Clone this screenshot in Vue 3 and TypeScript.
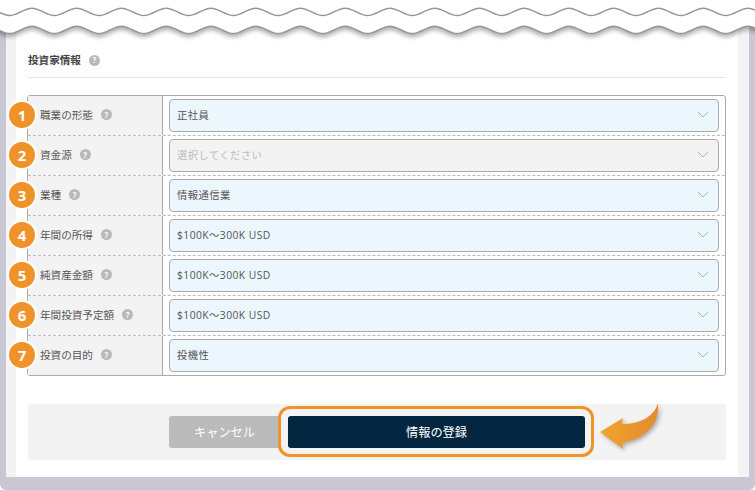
<script setup lang="ts">
interface Row { label: string; value: string; disabled?: boolean }
const rows: Row[] = [
  { label: '職業の形態', value: '正社員' },
  { label: '資金源', value: '選択してください', disabled: true },
  { label: '業種', value: '情報通信業' },
  { label: '年間の所得', value: '$100K～300K USD' },
  { label: '純資産金額', value: '$100K～300K USD' },
  { label: '年間投資予定額', value: '$100K～300K USD' },
  { label: '投資の目的', value: '投機性' },
]
function wave(y: number): string {
  const period = 44.75
  const half = period / 2
  const k = half * 0.3642
  const start = -35.15
  const low = y + 7.4
  let d = `M${start} ${low}`
  for (let x = start; x < 780; x += period) {
    d += ` C${x + k} ${low} ${x + half - k} ${y} ${x + half} ${y}`
    d += ` C${x + half + k} ${y} ${x + period - k} ${low} ${x + period} ${low}`
  }
  return d
}
const lineWave = wave(8.2)
const edgeWave = wave(26.2)
const fillWave = `${edgeWave} L780 0 L-40 0 Z`
</script>

<template>
  <div class="page">
    <div class="frame">
      <div class="gutter">
        <main class="sheet">
          <header class="section-head">
            <h2>投資家情報</h2>
            <span class="help">?</span>
          </header>
          <div class="table">
            <div v-for="(row, i) in rows" :key="row.label" class="row">
              <div class="label">
                <span class="badge">{{ i + 1 }}</span>
                <span>{{ row.label }}</span>
                <span class="help">?</span>
              </div>
              <div class="cell">
                <div class="select" :class="{ disabled: row.disabled }">
                  <span>{{ row.value }}</span>
                  <svg class="chevron" width="12" height="7" viewBox="0 0 12 7">
                    <path d="M1 1l5 5 5-5" fill="none" stroke="#aab0b4" stroke-width="1" />
                  </svg>
                </div>
              </div>
            </div>
          </div>
          <footer class="actions">
            <button class="btn cancel" type="button">キャンセル</button>
            <div class="ring-wrap">
              <button class="btn submit" type="button">情報の登録</button>
            </div>
            <svg class="arrow" width="66" height="52" viewBox="596 400 66 52">
              <defs>
                <linearGradient id="arrowFill" x1="0" y1="0" x2="1" y2="0">
                  <stop offset="0" stop-color="#eda62e" />
                  <stop offset="1" stop-color="#e58a2d" />
                </linearGradient>
              </defs>
              <path d="M600 432 L623 418 L622 424 C640 424 654 417 658 403 C660 424 646 438 622 443 L623 449 Z" fill="url(#arrowFill)" />
            </svg>
          </footer>
        </main>
      </div>
    </div>
    <svg class="torn" width="755" height="48" viewBox="0 0 755 48">
      <g class="edge">
        <path :d="fillWave" fill="#fff" stroke="none" />
        <path :d="edgeWave" fill="none" stroke="#969696" stroke-width="1.5" />
      </g>
      <path :d="lineWave" fill="none" stroke="#969696" stroke-width="1.5" />
    </svg>
  </div>
</template>

<style>
html, body { margin: 0; background: #fff; }
</style>

<style scoped>
.page {
  position: relative;
  width: 755px;
  height: 490px;
  overflow: hidden;
  background: #fff;
  font-family: "Open Sans", "Noto Sans CJK JP", sans-serif;
  color: #555;
}
.frame {
  height: 490px;
  box-sizing: border-box;
  padding: 0 6px 13px;
  background: #c8c8d4;
  border-radius: 0 0 6px 6px;
}
.gutter {
  height: 100%;
  padding: 0 11px 0 10px;
  background: #f3f3f3;
}
.sheet {
  height: 100%;
  box-sizing: border-box;
  padding: 0 12px 0 11px;
  background: #fff;
}
.section-head {
  display: flex;
  align-items: center;
  gap: 8px;
  height: 78px;
  box-sizing: border-box;
  padding: 46px 0 3px 1px;
  border-bottom: 1px solid #e6e6e6;
}
h2 {
  margin: 0;
  font-size: 10.6px;
  line-height: 18px;
  font-weight: 700;
  color: #444;
}
.help {
  display: inline-flex;
  align-items: center;
  justify-content: center;
  width: 11px;
  height: 11px;
  border-radius: 50%;
  background: #b9b9b9;
  color: #fff;
  font-size: 8px;
  font-weight: 700;
  line-height: 1;
}
.table {
  margin-top: 17px;
  border: 1px solid #aaa;
  border-radius: 3px;
}
.row {
  display: flex;
  height: 40px;
  box-sizing: border-box;
  border-bottom: 1px dashed #bbb;
}
.row:last-child {
  height: 39px;
  border-bottom: 0;
}
.label {
  position: relative;
  display: flex;
  align-items: center;
  gap: 8px;
  width: 135px;
  box-sizing: border-box;
  padding: 0 0 2px 12px;
  background: #f3f3f3;
  border-right: 1px solid #aaa;
  font-size: 10.6px;
}
.badge {
  position: absolute;
  left: -21px;
  top: 4px;
  width: 26px;
  height: 26px;
  border: 2px solid #fff;
  border-radius: 50%;
  background: #ef922a;
  color: #fff;
  font-size: 15px;
  font-weight: 700;
  line-height: 26px;
  text-align: center;
}
.cell {
  flex: 1;
  padding: 3px 6px 0 6px;
}
.select {
  display: flex;
  align-items: center;
  justify-content: space-between;
  height: 33px;
  box-sizing: border-box;
  padding: 0 9px 2px 7px;
  border: 1px solid #aaa;
  border-radius: 4px;
  background: #ecf7fd;
  font-size: 10.3px;
  letter-spacing: 0.45px;
  color: #555;
}
.select.disabled {
  background: #f3f3f3;
  color: #bbb;
}
.actions {
  position: relative;
  display: flex;
  align-items: center;
  gap: 8px;
  height: 56px;
  box-sizing: border-box;
  margin: 28px 0 0 1px;
  padding-left: 141px;
  background: #f3f3f3;
  border-radius: 3px;
}
.btn {
  height: 32px;
  border: 0;
  border-radius: 3px;
  color: #fff;
  font: inherit;
  font-size: 12.2px;
}
.cancel {
  width: 111px;
  background: #bbb;
}
.ring-wrap {
  position: relative;
  display: flex;
}
.ring-wrap::after {
  content: "";
  position: absolute;
  inset: -10px -9px -9px -10px;
  border: 3px solid #ef922a;
  border-radius: 12px;
  pointer-events: none;
}
.submit {
  width: 297px;
  background: #02263f;
}
.arrow {
  position: absolute;
  left: 568px;
  top: -4px;
  filter: drop-shadow(2px 2px 2px rgba(0, 0, 0, 0.3));
}
.torn {
  position: absolute;
  left: 0;
  top: 0;
}
.edge {
  filter: drop-shadow(0 3px 2px rgba(0, 0, 0, 0.3));
}
</style>
